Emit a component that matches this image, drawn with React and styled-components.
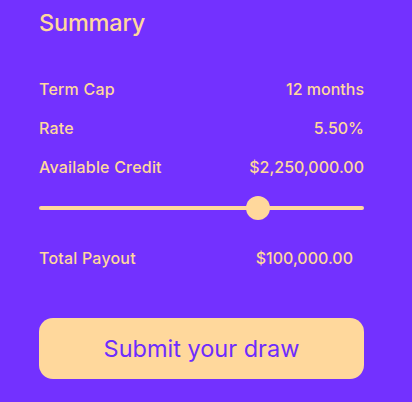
import React from "react";
import styled, { createGlobalStyle } from "styled-components";

const PURPLE = "#7331ff";
const PEACH = "#ffd89c";

const GlobalStyle = createGlobalStyle`
  html, body {
    margin: 0;
    padding: 0;
    background: ${PURPLE};
  }
  body {
    font-family: "Inter", "Noto Sans", sans-serif;
  }
`;

const Panel = styled.section`
  box-sizing: border-box;
  width: 412px;
  height: 402px;
  padding: 9px 48px 0 39px;
  background: ${PURPLE};
  color: ${PEACH};
  display: flex;
  flex-direction: column;
`;

const Title = styled.h2`
  margin: 0 0 32px;
  font-size: 23.5px;
  line-height: 28px;
  font-weight: 500;
  letter-spacing: -0.2px;
`;

const Row = styled.div`
  display: flex;
  justify-content: space-between;
  align-items: center;
  height: 39px;
  font-size: 16px;
  font-weight: 500;
  padding-right: ${(p) => p.$inset || 0}px;
`;

const Label = styled.span`
  letter-spacing: 0.2px;
`;

const Track = styled.div`
  position: relative;
  height: 24px;
  margin: 10px 0 18px;
  display: flex;
  align-items: center;

  &::before {
    content: "";
    flex: 1;
    height: 4px;
    border-radius: 2px;
    background: ${PEACH};
  }
`;

const Thumb = styled.span`
  position: absolute;
  top: 0;
  width: 24px;
  height: 24px;
  margin-left: -12px;
  border-radius: 50%;
  background: ${PEACH};
`;

const SubmitButton = styled.button`
  margin-top: 41px;
  height: 61px;
  border: none;
  border-radius: 14px;
  background: ${PEACH};
  color: #6e2cff;
  font-family: inherit;
  font-size: 23.5px;
  font-weight: 400;
  cursor: pointer;
`;

function Slider({ value }) {
  return (
    <Track>
      <Thumb style={{ left: `${value * 100}%` }} />
    </Track>
  );
}

const rows = [
  ["Term Cap", "12 months"],
  ["Rate", "5.50%"],
  ["Available Credit", "$2,250,000.00"],
];

export default function App() {
  return (
    <>
      <GlobalStyle />
      <Panel>
        <Title>Summary</Title>
        {rows.map(([label, value]) => (
          <Row key={label}>
            <Label>{label}</Label>
            <span>{value}</span>
          </Row>
        ))}
        <Slider value={0.674} />
        <Row $inset={11}>
          <Label>Total Payout</Label>
          <span>$100,000.00</span>
        </Row>
        <SubmitButton type="button">Submit your draw</SubmitButton>
      </Panel>
    </>
  );
}
